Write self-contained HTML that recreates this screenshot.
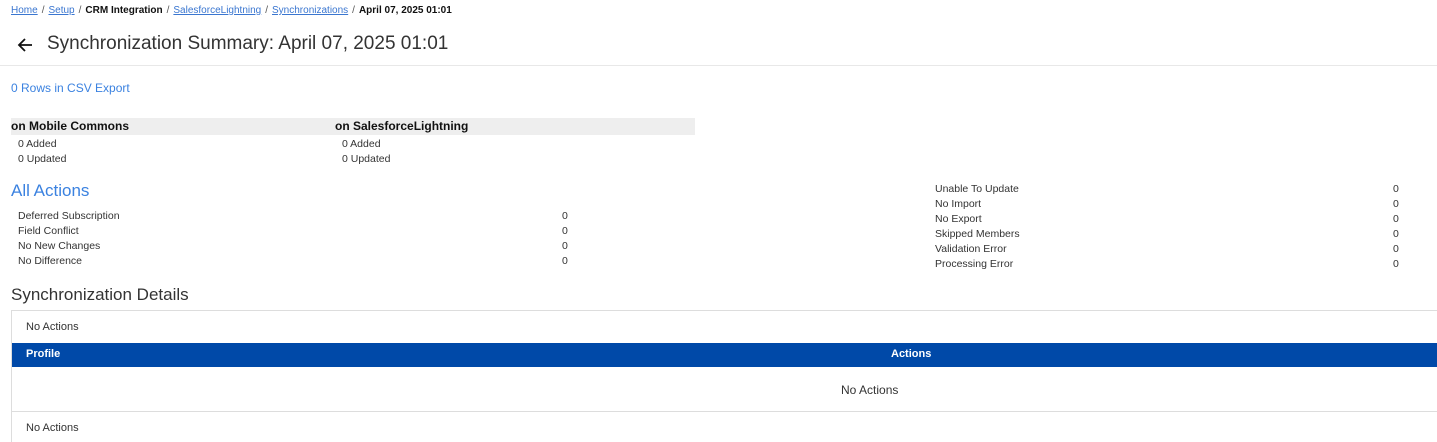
<!DOCTYPE html>
<html style="overflow:hidden;height:442px"><head><meta charset="utf-8"><style>
*{margin:0;padding:0;box-sizing:border-box}
body{width:1437px;height:442px;overflow:hidden;background:#fff;font-family:"Liberation Sans",sans-serif;color:#222;position:relative}
.a{position:absolute;white-space:nowrap}
.bc{font-size:10px;top:5px;left:11px}
.bc a{color:#3a76d0;text-decoration:underline}
.bc b{color:#111}
.bc span{color:#555;margin:0 4px}
.s{font-size:10.5px;color:#333}
.blue{color:#3b82e0}
</style></head><body>
<div class="a bc"><a>Home</a><span>/</span><a>Setup</a><span>/</span><b>CRM Integration</b><span>/</span><a>SalesforceLightning</a><span>/</span><a>Synchronizations</a><span>/</span><b>April 07, 2025 01:01</b></div>
<svg class="a" style="left:17px;top:37px" width="16" height="16" viewBox="0 0 16 16"><path d="M15 8H2M8 2L2 8l6 6" stroke="#111" stroke-width="1.8" fill="none"/></svg>
<div class="a" style="left:47px;top:33px;font-size:19px;color:#333">Synchronization Summary: April 07, 2025 01:01</div>
<div class="a" style="left:0;top:65px;width:1437px;border-top:1px solid #e8e8e8"></div>
<div class="a blue" style="left:11px;top:81px;font-size:12px">0 Rows in CSV Export</div>
<div class="a" style="left:11px;top:118px;width:684px;height:17px;background:#eee"></div>
<div class="a" style="left:11px;top:119px;font-size:12px;font-weight:bold;color:#111">on Mobile Commons</div>
<div class="a" style="left:335px;top:119px;font-size:12px;font-weight:bold;color:#111">on SalesforceLightning</div>
<div class="a s" style="left:18px;top:138px">0 Added</div>
<div class="a s" style="left:18px;top:153px">0 Updated</div>
<div class="a s" style="left:342px;top:138px">0 Added</div>
<div class="a s" style="left:342px;top:153px">0 Updated</div>
<div class="a blue" style="left:11px;top:181px;font-size:17px">All Actions</div>
<div class="a s" style="left:18px;top:209px;line-height:15px">Deferred Subscription<br>Field Conflict<br>No New Changes<br>No Difference</div>
<div class="a s" style="left:562px;top:209px;line-height:15px">0<br>0<br>0<br>0</div>
<div class="a s" style="left:935px;top:182px;line-height:15px">Unable To Update<br>No Import<br>No Export<br>Skipped Members<br>Validation Error<br>Processing Error</div>
<div class="a s" style="left:1393px;top:182px;line-height:15px">0<br>0<br>0<br>0<br>0<br>0</div>
<div class="a" style="left:11px;top:285px;font-size:17px;color:#333">Synchronization Details</div>
<div class="a" style="left:11px;top:310px;width:1426px;height:132px;border:1px solid #ddd;border-right:none;border-bottom:none"></div>
<div class="a s" style="left:26px;top:321px;font-size:11px">No Actions</div>
<div class="a" style="left:12px;top:343px;width:1425px;height:24px;background:#0049a8"></div>
<div class="a" style="left:26px;top:348px;font-size:11px;font-weight:bold;color:#fff">Profile</div>
<div class="a" style="left:891px;top:348px;font-size:11px;font-weight:bold;color:#fff">Actions</div>
<div class="a" style="left:841px;top:383px;font-size:12px;color:#333">No Actions</div>
<div class="a" style="left:12px;top:411px;width:1425px;border-top:1px solid #ddd"></div>
<div class="a s" style="left:26px;top:422px;font-size:11px">No Actions</div>
</body></html>
